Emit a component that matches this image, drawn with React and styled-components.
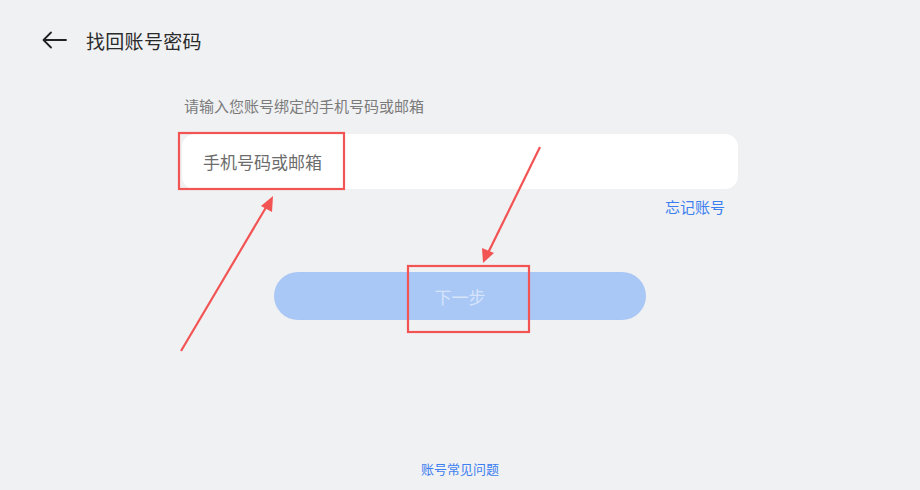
import React from "react";
import styled, { createGlobalStyle } from "styled-components";

const Global = createGlobalStyle`
  html, body { margin: 0; padding: 0; background: #f0f1f3; }
  body { font-family: "Noto Sans CJK SC", "Noto Sans", sans-serif; }
`;

const Page = styled.div`
  position: relative;
  width: 920px;
  height: 490px;
  background: #f0f1f3;
  display: flex;
  flex-direction: column;
  overflow: hidden;
`;

const Header = styled.div`
  display: flex;
  align-items: center;
  height: 40px;
  padding: 20px 0 0 41px;
  gap: 18px;
`;

const BackButton = styled.div`
  width: 27px;
  height: 20px;
  display: flex;
  align-items: center;
`;

const Title = styled.div`
  font-size: 19px;
  color: #2a2a2a;
  letter-spacing: 0.3px;
`;

const Form = styled.div`
  width: 556px;
  margin: 35px auto 0;
  display: flex;
  flex-direction: column;
`;

const Label = styled.div`
  font-size: 15px;
  color: #7b7b7b;
  padding-left: 2px;
  line-height: 21px;
`;

const Input = styled.div`
  margin-top: 18px;
  height: 55px;
  background: #fff;
  border-radius: 13px;
  display: flex;
  align-items: center;
  padding-left: 21px;
  font-size: 17px;
  color: #6c6c6c;
`;

const Link = styled.div`
  font-size: ${(p) => p.size || 15}px;
  color: #3d7ff0;
  text-align: ${(p) => p.align || "left"};
  padding-right: ${(p) => p.pr || 0}px;
`;

const Button = styled.div`
  width: 372px;
  height: 48px;
  margin: 55px auto 0;
  background: #a9c8f6;
  border-radius: 24px;
  display: flex;
  align-items: center;
  justify-content: center;
  font-size: 17px;
  color: #d5e4fb;
`;

const Footer = styled.div`
  margin-top: auto;
  padding-bottom: 12px;
  display: flex;
  justify-content: center;
`;

const Overlay = styled.svg`
  position: absolute;
  left: 0;
  top: 0;
  pointer-events: none;
`;

export default function App() {
  return (
    <Page>
      <Global />
      <Header>
        <BackButton>
          <svg width="27" height="20" viewBox="0 0 27 20">
            <path d="M25 10 H3 M10 2.5 L2.5 10 L10 17.5" fill="none" stroke="#222" strokeWidth="1.8" strokeLinecap="round" strokeLinejoin="round" />
          </svg>
        </BackButton>
        <Title>找回账号密码</Title>
      </Header>
      <Form>
        <Label>请输入您账号绑定的手机号码或邮箱</Label>
        <Input>手机号码或邮箱</Input>
        <Link align="right" pr={13} style={{ marginTop: 7 }}>忘记账号</Link>
      </Form>
      <Button>下一步</Button>
      <Footer>
        <Link size={13}>账号常见问题</Link>
      </Footer>
      <Overlay width="920" height="490" viewBox="0 0 920 490">
        <g fill="none" stroke="#f25454" strokeWidth="2.2">
          <rect x="179" y="133" width="165" height="56" />
          <rect x="408" y="266" width="121" height="66" />
          <line x1="181" y1="351" x2="268" y2="204" />
          <line x1="540" y1="147" x2="487" y2="255" />
        </g>
        <g fill="#f25454">
          <polygon points="273,196 272,212 261,206" />
          <polygon points="483,263 482,248 494,253" />
        </g>
      </Overlay>
    </Page>
  );
}
